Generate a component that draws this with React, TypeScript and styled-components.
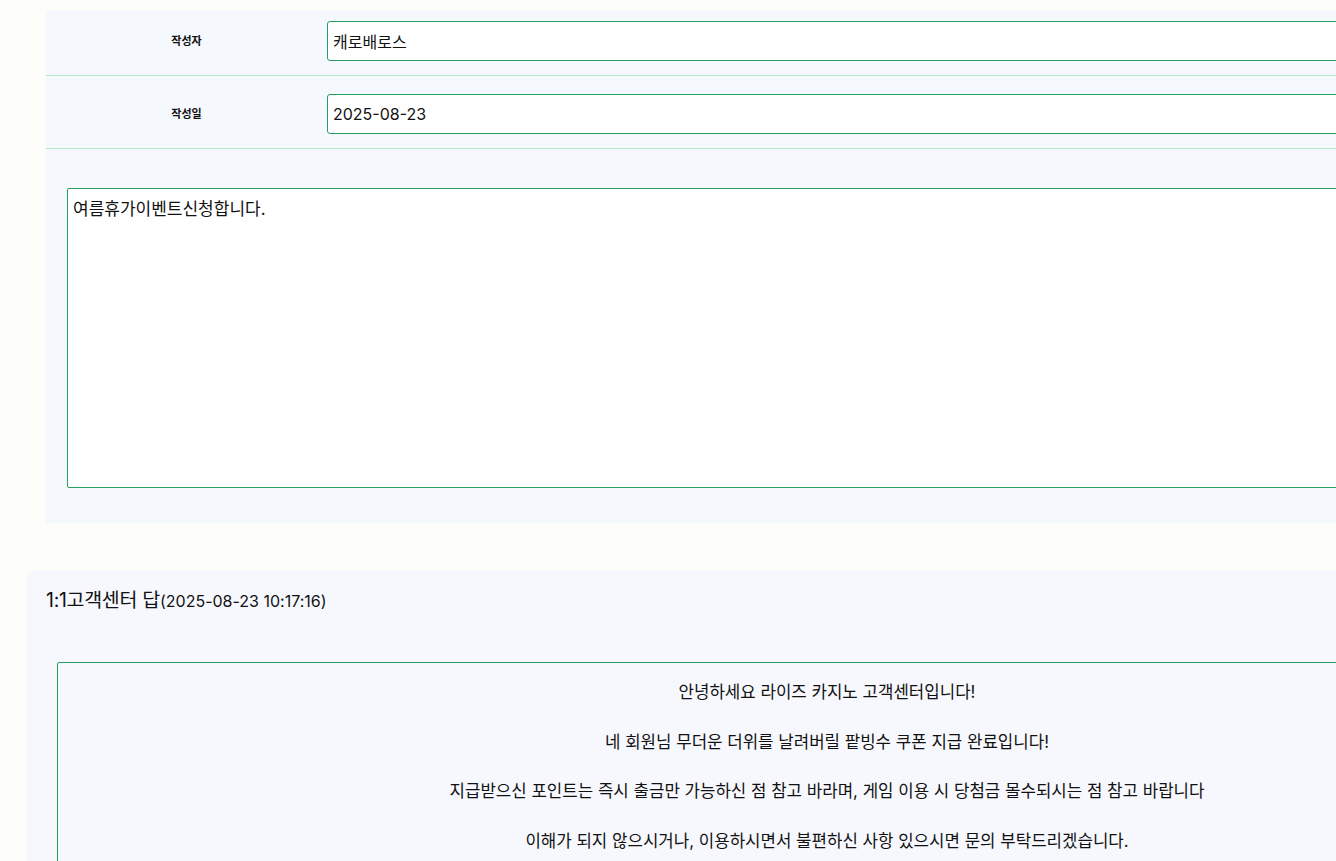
import React from 'react';
import styled, { createGlobalStyle } from 'styled-components';

const GlobalStyle = createGlobalStyle`
  html, body {
    margin: 0;
    padding: 0;
    background: #fdfefa;
    overflow: hidden;
  }
  body {
    font-family: Inter, 'Noto Sans CJK KR', sans-serif;
    color: #111;
  }
`;

const green = '#259e62';

const Page = styled.div`
  width: 1640px;
  padding: 10px 0 0 0;
`;

const FormTable = styled.div`
  margin-left: 46px;
  width: 1560px;
  background: #f5f8fd;
`;

const Row = styled.div<{ $padTop: number; $padBottom: number }>`
  display: grid;
  grid-template-columns: 281px 1fr;
  align-items: center;
  padding: ${(p) => p.$padTop}px 0 ${(p) => p.$padBottom}px;
  border-bottom: 1px solid #b5ebcb;
`;

const Label = styled.div`
  text-align: center;
  font-size: 11px;
  line-height: 16px;
  font-weight: 700;
  color: #111;
`;

const Input = styled.input`
  box-sizing: border-box;
  height: 40px;
  width: 100%;
  border: 1px solid ${green};
  border-radius: 3px;
  background: #fff;
  padding: 0 5px;
  font-family: inherit;
  font-size: 16px;
  color: #111;
  outline: none;
`;

const ContentCell = styled.div`
  padding: 39px 21px 35px;
`;

const TextArea = styled.textarea`
  display: block;
  box-sizing: border-box;
  width: 100%;
  height: 300px;
  border: 1px solid ${green};
  border-radius: 2px;
  background: #fff;
  padding: 6px 5px;
  font-family: inherit;
  font-size: 17px;
  color: #111;
  resize: none;
  outline: none;
`;

const AnswerSection = styled.section`
  margin: 47px 0 0 26px;
  width: 1602px;
  background: #f7f8fe;
  border-radius: 10px 10px 0 0;
  padding: 18px 31px 0 31px;
  box-sizing: border-box;
`;

const AnswerTitle = styled.h3`
  margin: 0 0 0 -11px;
  font-size: 19.5px;
  line-height: 24px;
  font-weight: 400;
  letter-spacing: -0.3px;
  color: #111;

  small {
    font-size: 16px;
    letter-spacing: 0;
  }
`;

const AnswerBox = styled.div`
  margin-top: 49px;
  border: 1px solid ${green};
  border-radius: 2px;
  padding: 5px 0 20px;
  min-height: 220px;
  text-align: center;
`;

const AnswerLine = styled.p`
  margin: 0;
  font-size: 16.8px;
  line-height: 49.6px;
  color: #111;
`;

const answerLines = [
  '안녕하세요 라이즈 카지노 고객센터입니다!',
  '네 회원님 무더운 더위를 날려버릴 팥빙수 쿠폰 지급 완료입니다!',
  '지급받으신 포인트는 즉시 출금만 가능하신 점 참고 바라며, 게임 이용 시 당첨금 몰수되시는 점 참고 바랍니다',
  '이해가 되지 않으시거나, 이용하시면서 불편하신 사항 있으시면 문의 부탁드리겠습니다.',
];

const App = (): JSX.Element => {
  return (
    <>
      <GlobalStyle />
      <Page>
        <FormTable>
          <Row $padTop={11} $padBottom={14}>
            <Label>작성자</Label>
            <Input defaultValue="캐로배로스" readOnly />
          </Row>
          <Row $padTop={18} $padBottom={14}>
            <Label>작성일</Label>
            <Input defaultValue="2025-08-23" readOnly />
          </Row>
          <ContentCell>
            <TextArea defaultValue="여름휴가이벤트신청합니다." readOnly />
          </ContentCell>
        </FormTable>

        <AnswerSection>
          <AnswerTitle>
            1:1고객센터 답<small>(2025-08-23 10:17:16)</small>
          </AnswerTitle>
          <AnswerBox>
            {answerLines.map((line) => (
              <AnswerLine key={line}>{line}</AnswerLine>
            ))}
          </AnswerBox>
        </AnswerSection>
      </Page>
    </>
  );
};

export default App;
